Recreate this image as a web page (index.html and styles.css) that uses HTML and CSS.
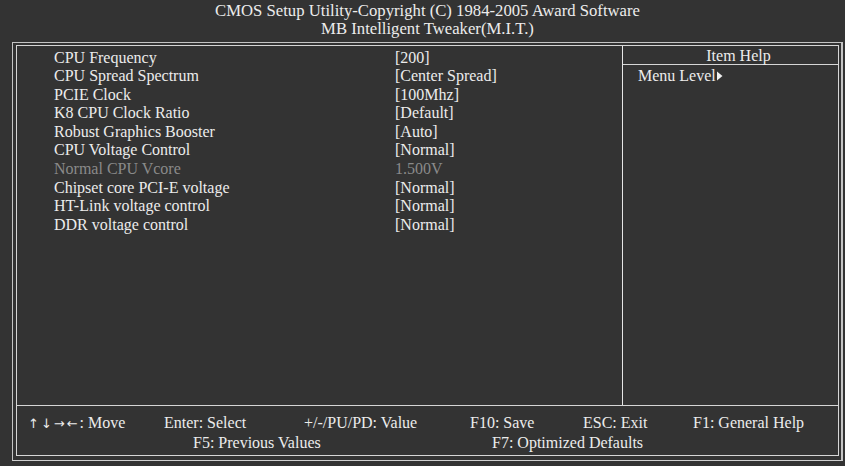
FILE: index.html
```html
<!DOCTYPE html>
<html>
<head>
<meta charset="utf-8">
<link rel="stylesheet" href="styles.css">
</head>
<body>
<div class="header">
  <div>CMOS Setup Utility-Copyright (C) 1984-2005 Award Software</div>
  <div>MB Intelligent Tweaker(M.I.T.)</div>
</div>
<div class="frame">
  <div class="inner">
    <div class="main">
      <div class="items">
        <div class="row"><span class="label">CPU Frequency</span><span>[200]</span></div>
        <div class="row"><span class="label">CPU Spread Spectrum</span><span>[Center Spread]</span></div>
        <div class="row"><span class="label">PCIE Clock</span><span>[100Mhz]</span></div>
        <div class="row"><span class="label">K8 CPU Clock Ratio</span><span>[Default]</span></div>
        <div class="row"><span class="label">Robust Graphics Booster</span><span>[Auto]</span></div>
        <div class="row"><span class="label">CPU Voltage Control</span><span>[Normal]</span></div>
        <div class="row disabled"><span class="label">Normal CPU Vcore</span><span>1.500V</span></div>
        <div class="row"><span class="label">Chipset core PCI-E voltage</span><span>[Normal]</span></div>
        <div class="row"><span class="label">HT-Link voltage control</span><span>[Normal]</span></div>
        <div class="row"><span class="label">DDR voltage control</span><span>[Normal]</span></div>
      </div>
      <div class="help">
        <div class="help-title">Item Help</div>
        <div class="help-body">Menu Level<svg class="tri" width="6" height="10" viewBox="0 0 6 10"><path d="M0 0.5 L5.5 5 L0 9.5 Z" fill="#f0f0f0"/></svg></div>
      </div>
    </div>
    <div class="footer">
      <div class="keys keys1">
        <span><span class="arrows">↑↓→←</span>: Move</span>
        <span>Enter: Select</span>
        <span>+/-/PU/PD: Value</span>
        <span>F10: Save</span>
        <span>ESC: Exit</span>
        <span>F1: General Help</span>
      </div>
      <div class="keys keys2">
        <span>F5: Previous Values</span>
        <span>F7: Optimized Defaults</span>
      </div>
    </div>
  </div>
</div>
</body>
</html>
```
FILE: styles.css
```css
html, body {
  margin: 0;
  padding: 0;
  background: #333333;
}
body {
  width: 845px;
  height: 466px;
  overflow: hidden;
  font-family: "Liberation Serif", "Times New Roman", serif;
  font-size: 16px;
  color: #ececec;
}
.header {
  box-sizing: border-box;
  height: 42px;
  width: 831px;
  margin-left: 12px;
  padding-top: 2px;
  font-size: 16.7px;
  line-height: 18.4px;
  text-align: center;
  white-space: nowrap;
}
.frame {
  box-sizing: border-box;
  margin-left: 12px;
  width: 831px;
  border: 1px solid #c4c4c4;
  border-right-width: 2px;
  border-bottom-color: #d0d0d0;
  padding: 2px 2px 4px 3px;
}
.inner {
  box-sizing: border-box;
  width: 823px;
  border: 1px solid #d6d6d6;
}
.main {
  display: flex;
  height: 359px;
}
.items {
  width: 605px;
  padding-top: 2.5px;
  padding-left: 37px;
  box-sizing: border-box;
}
.row {
  display: flex;
  line-height: 18.6px;
  white-space: nowrap;
}
.label {
  width: 341px;
}
.disabled {
  color: #8a8a8a;
}
.help {
  flex: 1;
  border-left: 1px solid #e6e6e6;
}
.help-title {
  box-sizing: border-box;
  height: 19px;
  padding-top: 2px;
  padding-left: 16px;
  line-height: 16px;
  text-align: center;
  border-bottom: 1px solid #d6d6d6;
}
.help-body {
  padding-top: 1.5px;
  padding-left: 15px;
  line-height: 18.6px;
}
.tri {
  margin-left: 1px;
  vertical-align: 0;
}
.footer {
  height: 49px;
  border-top: 1px solid #d6d6d6;
}
.keys {
  display: grid;
  line-height: 18.5px;
  white-space: nowrap;
}
.arrows {
  font-family: "DejaVu Sans", sans-serif;
  font-size: 13px;
  letter-spacing: 2px;
}
.keys1 {
  padding-top: 8px;
  padding-left: 11px;
  grid-template-columns: 136px 140px 166px 113px 110px auto;
}
.keys2 {
  padding-left: 176px;
  grid-template-columns: 299px auto;
}
```
